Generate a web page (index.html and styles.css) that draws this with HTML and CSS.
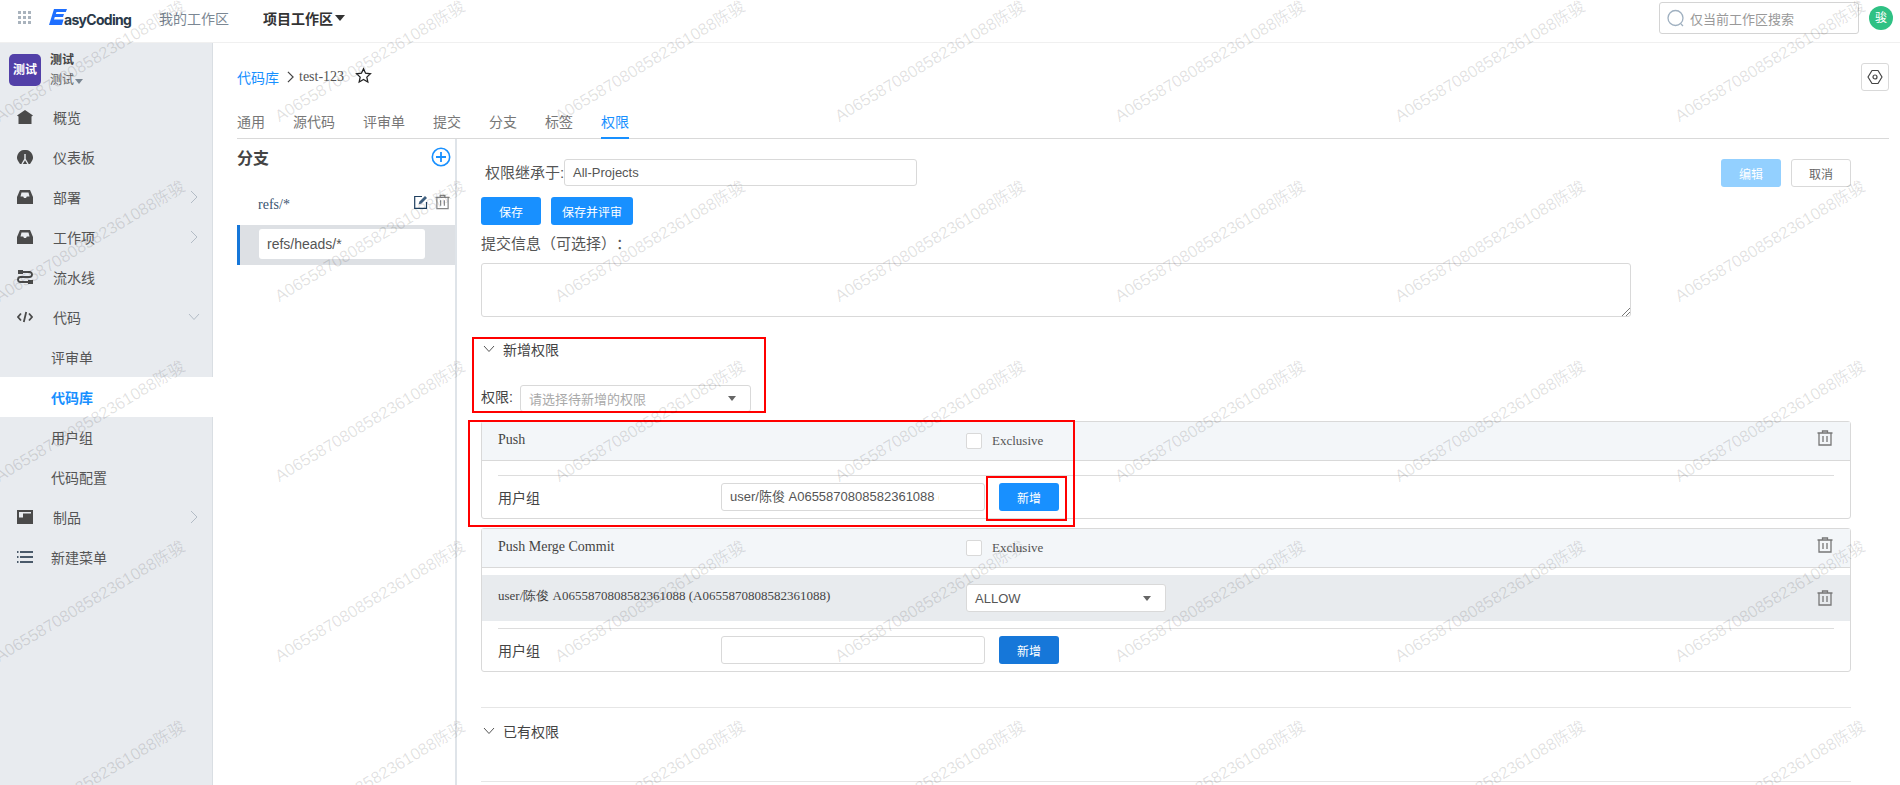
FILE: index.html
```html
<!DOCTYPE html>
<html>
<head>
  <meta charset="utf-8">
  <title>EasyCoding</title>
  <link rel="stylesheet" href="styles.css">
</head>
<body>
  <svg class="defs" width="0" height="0">
    <symbol id="i-trash" viewBox="0 0 16 16"><path d="M.5 3h15M5.500 3V1h5v2M2 3v12h12V3M6 6v6M10 6v6" fill="none" stroke="currentColor" stroke-width="1.300"/></symbol>
    <symbol id="i-inbox" viewBox="0 0 16 14"><path d="M3 0h10l3 7v7H0V7z" fill="currentColor"/><path d="M3.500 6.500 4.500 2.500h7l1 4h-2.700l-.8 1.500H7L6.200 6.500z" fill="#e8ebef"/></symbol>
    <symbol id="i-caret" viewBox="0 0 10 6"><path d="M0 0h10L5 6z" fill="currentColor"/></symbol>
    <symbol id="i-right" viewBox="0 0 8 14"><path d="M1 1l6 6-6 6" fill="none" stroke="currentColor" stroke-width="1"/></symbol>
    <symbol id="i-down" viewBox="0 0 12 8"><path d="M1 1l5 5.500L11 1" fill="none" stroke="currentColor" stroke-width="1"/></symbol>
  </svg>

  <header class="topbar">
    <svg class="apps" width="14" height="14" viewBox="0 0 14 14" fill="#a9b3bd">
      <rect x="0" y="0" width="3" height="3"/><rect x="5" y="0" width="3" height="3"/><rect x="10" y="0" width="3" height="3"/>
      <rect x="0" y="5" width="3" height="3"/><rect x="5" y="5" width="3" height="3"/><rect x="10" y="5" width="3" height="3"/>
      <rect x="0" y="10" width="3" height="3"/><rect x="5" y="10" width="3" height="3"/><rect x="10" y="10" width="3" height="3"/>
    </svg>
    <div class="logo">
      <svg width="18" height="16" viewBox="0 0 18 16"><path d="M5 0h13l-1.200 3H7.500L6.800 5H15l-1 3H5.800L5 10.500h9.500L13 16H0z" fill="#1f6fff"/></svg>
      <span>asyCoding</span>
    </div>
    <a class="topnav">我的工作区</a>
    <a class="topnav topnav-on">项目工作区<svg width="10" height="6"><use href="#i-caret"/></svg></a>
    <div class="topsearch">
      <svg width="18" height="18" viewBox="0 0 18 18"><circle cx="8.500" cy="9" r="7.500" fill="none" stroke="#9fb0c0" stroke-width="1.300"/><path d="M14 15l2 2" stroke="#9fb0c0" stroke-width="1.300"/></svg>
      <span>仅当前工作区搜索</span>
    </div>
    <div class="avatar">骏</div>
  </header>

  <div class="layout">
    <aside class="sidebar">
      <div class="project">
        <div class="project-logo">测试</div>
        <div class="project-text">
          <div class="project-name">测试</div>
          <div class="project-sub">测试<svg width="8" height="5"><use href="#i-caret"/></svg></div>
        </div>
      </div>
      <ul class="menu">
        <li class="item">
          <svg class="ico" width="16" height="14" viewBox="0 0 16 14"><path d="M8 0l8 5.500-1.500 1V14h-13V6.500L0 5.500z" fill="currentColor"/></svg>概览
        </li>
        <li class="item">
          <svg class="ico" width="16" height="14" viewBox="0 0 16 14"><path d="M8 0a7.500 7.500 0 0 1 6 12.500L13 14H3l-1-1.500A7.500 7.500 0 0 1 8 0z" fill="currentColor"/><path d="M8 4v5l-3 5M8 9l3 5" fill="none" stroke="#e8ebef" stroke-width="1.400"/></svg>仪表板
        </li>
        <li class="item">
          <svg class="ico" width="16" height="14"><use href="#i-inbox"/></svg>部署
          <svg class="arrow" width="8" height="14"><use href="#i-right"/></svg>
        </li>
        <li class="item">
          <svg class="ico" width="16" height="14"><use href="#i-inbox"/></svg>工作项
          <svg class="arrow" width="8" height="14"><use href="#i-right"/></svg>
        </li>
        <li class="item">
          <svg class="ico" width="16" height="14" viewBox="0 0 16 14"><path d="M1 0h5v4H1zM11 10h5v4h-5z" fill="currentColor"/><path d="M6 2h6.500a2.500 2.500 0 0 1 0 5h-9a2.500 2.500 0 0 0 0 5H11" fill="none" stroke="currentColor" stroke-width="1.800"/></svg>流水线
        </li>
        <li class="item">
          <svg class="ico" width="16" height="12" viewBox="0 0 16 12"><path d="M4 2.500 1 6l3 3.500M12 2.500 15 6l-3 3.500M9.200 1 6.800 11" fill="none" stroke="currentColor" stroke-width="1.800"/></svg>代码
          <svg class="arrow arrow-down" width="12" height="8"><use href="#i-down"/></svg>
        </li>
        <li class="item sub">评审单</li>
        <li class="item sub sub-on">代码库</li>
        <li class="item sub">用户组</li>
        <li class="item sub">代码配置</li>
        <li class="item">
          <svg class="ico" width="16" height="14" viewBox="0 0 16 14"><path d="M0 0h16v14H0z" fill="currentColor"/><path d="M2 2h12v1.500H6v4H2z" fill="#e8ebef"/></svg>制品
          <svg class="arrow" width="8" height="14"><use href="#i-right"/></svg>
        </li>
        <li class="item item-list">
          <svg class="ico" width="16" height="14" viewBox="0 0 16 14"><path d="M0 1h1.500v2H0zM0 6h1.500v2H0zM0 11h1.500v2H0zM3 1h13v2H3zM3 6h13v2H3zM3 11h13v2H3z" fill="#4a5a6a"/></svg>新建菜单
        </li>
      </ul>
    </aside>

    <main class="main">
      <div class="crumbs">
        <a class="crumb-link">代码库</a>
        <svg class="crumb-sep" width="7" height="12" viewBox="0 0 8 14"><path d="M1 1l6 6-6 6" fill="none" stroke="#444" stroke-width="1.400"/></svg>
        <span class="crumb-name">test-123</span>
        <svg class="star" width="17" height="17" viewBox="0 0 24 24"><path d="M12 2.500l2.900 6.300 6.900.8-5.100 4.700 1.400 6.800-6.100-3.400-6.100 3.400 1.400-6.800-5.100-4.700 6.900-.8z" fill="none" stroke="#222" stroke-width="1.800"/></svg>
        <button class="setting">
          <svg width="16" height="16" viewBox="0 0 16 16"><path d="M5 1.500h6L15 8l-4 6.500H5L1 8z" fill="none" stroke="#444" stroke-width="1.200" stroke-linejoin="round"/><circle cx="8" cy="8" r="2" fill="none" stroke="#444" stroke-width="1.200"/></svg>
        </button>
      </div>
      <nav class="tabs">
        <a class="tab">通用</a>
        <a class="tab">源代码</a>
        <a class="tab">评审单</a>
        <a class="tab">提交</a>
        <a class="tab">分支</a>
        <a class="tab">标签</a>
        <a class="tab tab-on">权限</a>
      </nav>

      <div class="content">
        <section class="branches">
          <div class="branches-head">
            <h3>分支</h3>
            <svg width="20" height="20" viewBox="0 0 20 20"><circle cx="10" cy="10" r="8.700" fill="none" stroke="#1890ff" stroke-width="1.600"/><path d="M10 5v10M5 10h10" stroke="#1890ff" stroke-width="1.800"/></svg>
          </div>
          <div class="branch">
            <span>refs/*</span>
            <svg class="edit" width="14" height="14" viewBox="0 0 14 14"><path d="M8 1.500H.7v11.800h11.800V7" fill="none" stroke="#1f3f5f" stroke-width="1.200"/><path d="M4.500 9.500l1-3L11 1l2 2-5.500 5.500z" fill="#3f5f7f"/></svg>
            <svg class="bin" width="15" height="16"><use href="#i-trash"/></svg>
          </div>
          <div class="branch-on">
            <div class="branch-input">refs/heads/*</div>
          </div>
        </section>

        <section class="perms">
          <div class="inherit">
            <label>权限继承于:</label>
            <div class="field inherit-field">All-Projects</div>
            <button class="btn btn-pale">编辑</button>
            <button class="btn btn-plain">取消</button>
          </div>
          <div class="actions">
            <button class="btn btn-blue">保存</button>
            <button class="btn btn-blue btn-wide">保存并评审</button>
          </div>
          <div class="commit-label">提交信息（可选择）：</div>
          <div class="commit-box">
            <svg width="9" height="9" viewBox="0 0 9 9"><path d="M9 1L1 9M9 5L5 9" stroke="#777" stroke-width="1"/></svg>
          </div>

          <div class="fold fold-first">
            <svg width="12" height="8"><use href="#i-down"/></svg>新增权限
          </div>
          <div class="perm-pick">
            <span>权限:</span>
            <div class="field select pick-select">请选择待新增的权限<svg width="8" height="5"><use href="#i-caret"/></svg></div>
          </div>

          <div class="card">
            <div class="card-head">
              <span class="card-name">Push</span>
              <span class="check"></span>
              <span class="exclusive">Exclusive</span>
              <svg class="card-bin" width="16" height="16"><use href="#i-trash"/></svg>
            </div>
            <div class="card-rule"></div>
            <div class="group-row">
              <span class="group-label">用户组</span>
              <div class="field group-input"><span>user/陈俊 A0655870808582361088 (A0655870808582361088)</span></div>
              <button class="btn btn-blue">新增</button>
            </div>
          </div>

          <div class="card card-two">
            <div class="card-head">
              <span class="card-name">Push Merge Commit</span>
              <span class="check"></span>
              <span class="exclusive">Exclusive</span>
              <svg class="card-bin" width="16" height="16"><use href="#i-trash"/></svg>
            </div>
            <div class="grant">
              <span class="grant-name">user/陈俊 A0655870808582361088 (A0655870808582361088)</span>
              <div class="field select grant-select">ALLOW<svg width="8" height="5"><use href="#i-caret"/></svg></div>
              <svg class="card-bin" width="16" height="16"><use href="#i-trash"/></svg>
            </div>
            <div class="card-rule card-rule-tight"></div>
            <div class="group-row">
              <span class="group-label">用户组</span>
              <div class="field group-input"></div>
              <button class="btn btn-dark">新增</button>
            </div>
          </div>

          <div class="rule rule-one"></div>
          <div class="fold fold-second">
            <svg width="12" height="8"><use href="#i-down"/></svg>已有权限
          </div>
          <div class="rule rule-two"></div>
        </section>
      </div>
    </main>
  </div>

  <!-- red annotation boxes -->
  <div class="mark mark-a"></div>
  <div class="mark mark-b"></div>
  <div class="mark mark-c"></div>

  <!-- watermark -->
  <div class="watermark">
    <span>A0655870808582361088陈骏</span><span>A0655870808582361088陈骏</span><span>A0655870808582361088陈骏</span><span>A0655870808582361088陈骏</span><span>A0655870808582361088陈骏</span><span>A0655870808582361088陈骏</span><span>A0655870808582361088陈骏</span>
    <span>A0655870808582361088陈骏</span><span>A0655870808582361088陈骏</span><span>A0655870808582361088陈骏</span><span>A0655870808582361088陈骏</span><span>A0655870808582361088陈骏</span><span>A0655870808582361088陈骏</span><span>A0655870808582361088陈骏</span>
    <span>A0655870808582361088陈骏</span><span>A0655870808582361088陈骏</span><span>A0655870808582361088陈骏</span><span>A0655870808582361088陈骏</span><span>A0655870808582361088陈骏</span><span>A0655870808582361088陈骏</span><span>A0655870808582361088陈骏</span>
    <span>A0655870808582361088陈骏</span><span>A0655870808582361088陈骏</span><span>A0655870808582361088陈骏</span><span>A0655870808582361088陈骏</span><span>A0655870808582361088陈骏</span><span>A0655870808582361088陈骏</span><span>A0655870808582361088陈骏</span>
    <span>A0655870808582361088陈骏</span><span>A0655870808582361088陈骏</span><span>A0655870808582361088陈骏</span><span>A0655870808582361088陈骏</span><span>A0655870808582361088陈骏</span><span>A0655870808582361088陈骏</span><span>A0655870808582361088陈骏</span>
  </div>
</body>
</html>
```

FILE: styles.css
```css
* {
  box-sizing: border-box;
}
html, body {
  height: 100%;
}
body {
  margin: 0;
  overflow: hidden;
  position: relative;
  font-family: "Liberation Sans", "Noto Sans CJK SC", sans-serif;
  font-size: 14px;
  color: #555;
  background: #fff;
  text-spacing-trim: space-all;
}
.defs {
  position: absolute;
}
button {
  font-family: inherit;
}

/* top bar */
.topbar {
  height: 43px;
  display: flex;
  align-items: center;
  border-bottom: 1px solid #f0f0f0;
  padding-bottom: 6px;
}
.apps {
  margin-left: 18px;
  margin-right: 17px;
}
.logo {
  display: flex;
  align-items: flex-end;
  width: 110px;
}
.logo svg {
  margin-bottom: 3px;
  margin-right: -3px;
}
.logo span {
  font-family: Inter, "Liberation Sans", sans-serif;
  font-weight: 700;
  font-size: 14px;
  letter-spacing: -.7px;
  color: #2b3a4a;
}
.topnav {
  color: #7b8793;
  margin-right: 34px;
}
.topnav-on {
  color: #333;
  font-weight: 700;
  display: flex;
  align-items: center;
}
.topnav-on svg {
  margin-left: 2px;
}
.topsearch {
  margin-left: auto;
  width: 200px;
  height: 32px;
  border: 1px solid #d4d4d4;
  border-radius: 3px;
  display: flex;
  align-items: center;
  padding-left: 7px;
  color: #999;
  font-size: 13px;
}
.topsearch svg {
  margin-right: 5px;
}
.avatar {
  width: 24px;
  height: 24px;
  border-radius: 50%;
  background: #2fc184;
  color: #fff;
  font-size: 12px;
  line-height: 24px;
  text-align: center;
  margin: 0 7px 0 10px;
}

.layout {
  display: flex;
  height: 742px;
}

/* sidebar */
.sidebar {
  width: 213px;
  flex: none;
  background: #e8ebef;
  border-right: 1px solid #d9dee3;
}
.project {
  height: 54px;
  display: flex;
  padding: 11px 0 0 9px;
}
.project-logo {
  width: 32px;
  height: 32px;
  border-radius: 5px;
  background: #5240a8;
  color: #fff;
  font-size: 12px;
  font-weight: 700;
  line-height: 32px;
  text-align: center;
}
.project-text {
  margin-left: 9px;
  font-size: 12px;
  line-height: 20px;
  margin-top: -4px;
}
.project-name {
  font-weight: 700;
  color: #444;
}
.project-sub {
  color: #666;
}
.project-sub svg {
  margin-left: 1px;
  color: #7b8793;
}
.menu {
  list-style: none;
  margin: 0;
  padding: 0;
}
.item {
  height: 40px;
  display: flex;
  align-items: center;
  color: #555;
  padding-left: 17px;
}
.ico {
  margin-right: 20px;
  color: #4a4a4a;
  flex: none;
}
.arrow {
  margin-left: auto;
  margin-right: 14px;
  color: #b3bcc6;
}
.arrow-down {
  margin-right: 12px;
}
.sub {
  padding-left: 51px;
}
.sub-on {
  background: #fff;
  color: #1890ff;
  font-weight: 700;
  margin-right: -1px;
}
.item-list .ico {
  margin-right: 18px;
}

/* main */
.main {
  flex: 1;
  min-width: 0;
  padding: 20px 11px 0 24px;
}
.crumbs {
  height: 28px;
  display: flex;
  align-items: center;
}
.crumb-link {
  color: #1890ff;
}
.crumb-sep {
  margin: 0 5px 0 8px;
}
.crumb-name {
  font-family: "Liberation Serif", serif;
  color: #555;
}
.star {
  margin-left: 11px;
  margin-top: -3px;
}
.setting {
  margin-left: auto;
  width: 28px;
  height: 28px;
  padding: 0;
  background: #fff;
  border: 1px solid #d9d9d9;
  border-radius: 3px;
  display: flex;
  align-items: center;
  justify-content: center;
}
.tabs {
  height: 48px;
  display: flex;
  align-items: flex-end;
  border-bottom: 1px solid #d9d9d9;
}
.tab {
  color: #777;
  margin-right: 28px;
  line-height: 22px;
  padding-bottom: 5px;
  height: 28px;
  margin-bottom: -1px;
}
.tab-on {
  color: #1890ff;
  border-bottom: 2px solid #1890ff;
  padding-bottom: 3px;
}
.content {
  display: flex;
  height: 646px;
}

/* branch list */
.branches {
  width: 220px;
  flex: none;
  border-right: 2px solid #dfe4e9;
}
.branches-head {
  height: 36px;
  display: flex;
  align-items: center;
  justify-content: space-between;
  padding-right: 4px;
}
.branches-head h3 {
  margin: 0;
  font-size: 16px;
  font-weight: 700;
  color: #444;
}
.branch {
  height: 50px;
  display: flex;
  align-items: center;
  padding: 8px 5px 0 21px;
  font-family: "Liberation Serif", serif;
  color: #3a5470;
}
.branch span {
  margin-top: 2px;
}
.edit {
  margin-left: auto;
  margin-top: -4px;
}
.bin {
  margin-left: 7px;
  margin-top: -4px;
  color: #888;
}
.branch-on {
  height: 40px;
  background: #dde0e4;
  border-left: 3px solid #1677d9;
  padding: 4px 0 0 19px;
}
.branch-input {
  width: 166px;
  height: 30px;
  background: #fff;
  border-radius: 3px;
  line-height: 30px;
  padding-left: 8px;
  color: #555;
}

/* permissions */
.perms {
  flex: 1;
  min-width: 0;
  padding: 20px 38px 0 24px;
}
.field {
  border: 1px solid #d9d9d9;
  border-radius: 3px;
  background: #fff;
  font-size: 13px;
  color: #555;
}
.inherit {
  display: flex;
  align-items: flex-start;
  height: 27px;
  padding-left: 4px;
}
.inherit label {
  flex: none;
  width: 79px;
  font-size: 15px;
  line-height: 27px;
  white-space: nowrap;
}
.inherit-field {
  width: 353px;
  height: 27px;
  line-height: 25px;
  padding-left: 8px;
}
.btn {
  width: 60px;
  height: 28px;
  padding: 0;
  border: 1px solid transparent;
  border-radius: 3px;
  font-size: 12px;
  color: #fff;
  background: #1890ff;
  flex: none;
}
.btn-wide {
  width: 82px;
  margin-left: 10px;
}
.btn-pale {
  margin-left: auto;
  background: #93d0ff;
}
.btn-plain {
  margin-left: 10px;
  background: #fff;
  color: #666;
  border-color: #d9d9d9;
}
.btn-dark {
  background: #1677d9;
}
.actions {
  display: flex;
  margin-top: 11px;
}
.commit-label {
  height: 38px;
  line-height: 38px;
  font-size: 15px;
}
.commit-box {
  width: 1150px;
  height: 54px;
  border: 1px solid #d9d9d9;
  border-radius: 3px;
  display: flex;
  align-items: flex-end;
  justify-content: flex-end;
}
.fold {
  display: flex;
  align-items: center;
  height: 24px;
  color: #444;
}
.fold svg {
  margin: 0 8px 0 2px;
  color: #555;
}
.fold-first {
  margin-top: 20px;
}
.fold-second {
  margin-top: 11px;
}
.perm-pick {
  display: flex;
  align-items: center;
  margin-top: 24px;
}
.perm-pick span {
  width: 39px;
  color: #444;
  margin-top: -5px;
}
.select {
  display: flex;
  align-items: center;
  justify-content: space-between;
  padding: 0 14px 0 8px;
}
.select svg {
  color: #666;
}
.pick-select {
  width: 231px;
  height: 27px;
  color: #aaa;
}
.card {
  width: 1370px;
  margin-top: 9px;
  border: 1px solid #d9d9d9;
  border-radius: 3px;
  padding-bottom: 7px;
}
.card-head {
  height: 39px;
  display: flex;
  align-items: center;
  padding: 0 17px 0 16px;
  background: #f3f6f9;
  border-bottom: 1px solid #d9d9d9;
  font-family: "Liberation Serif", serif;
  color: #444;
}
.card-name {
  width: 468px;
  margin-top: -2px;
}
.check {
  width: 16px;
  height: 16px;
  border: 1px solid #d9d9d9;
  border-radius: 2px;
  background: #fff;
  margin-right: 10px;
}
.exclusive {
  font-size: 13px;
  color: #555;
}
.card-bin {
  margin-left: auto;
  color: #777;
  margin-top: -6px;
}
.card-rule {
  height: 1px;
  background: #ddd;
  margin: 14px 16px 7px;
}
.card-rule-tight {
  margin-top: 7px;
}
.group-row {
  display: flex;
  align-items: center;
  padding: 0 16px;
}
.group-label {
  width: 223px;
  color: #444;
}
.group-input {
  width: 264px;
  height: 28px;
  line-height: 26px;
  padding: 0 8px;
  margin-right: 14px;
  overflow: hidden;
  white-space: nowrap;
}
.group-input span {
  display: block;
  width: 209px;
  overflow: hidden;
}
.grant {
  height: 46px;
  margin-top: 7px;
  background: #e8ebee;
  display: flex;
  align-items: center;
  padding: 0 17px 0 16px;
}
.grant-name {
  width: 468px;
  flex: none;
  font-family: "Liberation Serif", serif;
  font-size: 13px;
  color: #444;
  margin-top: -4px;
  white-space: nowrap;
}
.grant-select {
  width: 200px;
  height: 28px;
}
.grant .card-bin {
  margin-top: 0;
}
.rule {
  width: 1370px;
  height: 1px;
  background: #e6e6e6;
}
.rule-one {
  margin-top: 35px;
}
.rule-two {
  margin-top: 38px;
}

/* annotations drawn over the page */
.mark {
  position: absolute;
  border: 2px solid #f00;
  pointer-events: none;
}
.mark-a {
  left: 472px;
  top: 337px;
  width: 294px;
  height: 76px;
}
.mark-b {
  left: 468px;
  top: 420px;
  width: 607px;
  height: 107px;
}
.mark-c {
  left: 986px;
  top: 476px;
  width: 81px;
  height: 45px;
}

/* watermark */
.watermark {
  position: absolute;
  left: -51px;
  top: -30px;
  display: grid;
  grid-template-columns: repeat(7, 280px);
  grid-auto-rows: 180px;
  pointer-events: none;
}
.watermark span {
  justify-self: center;
  align-self: center;
  white-space: nowrap;
  font-size: 16.500px;
  color: rgba(0, 0, 0, .12);
  transform: rotate(-31deg);
}
```
